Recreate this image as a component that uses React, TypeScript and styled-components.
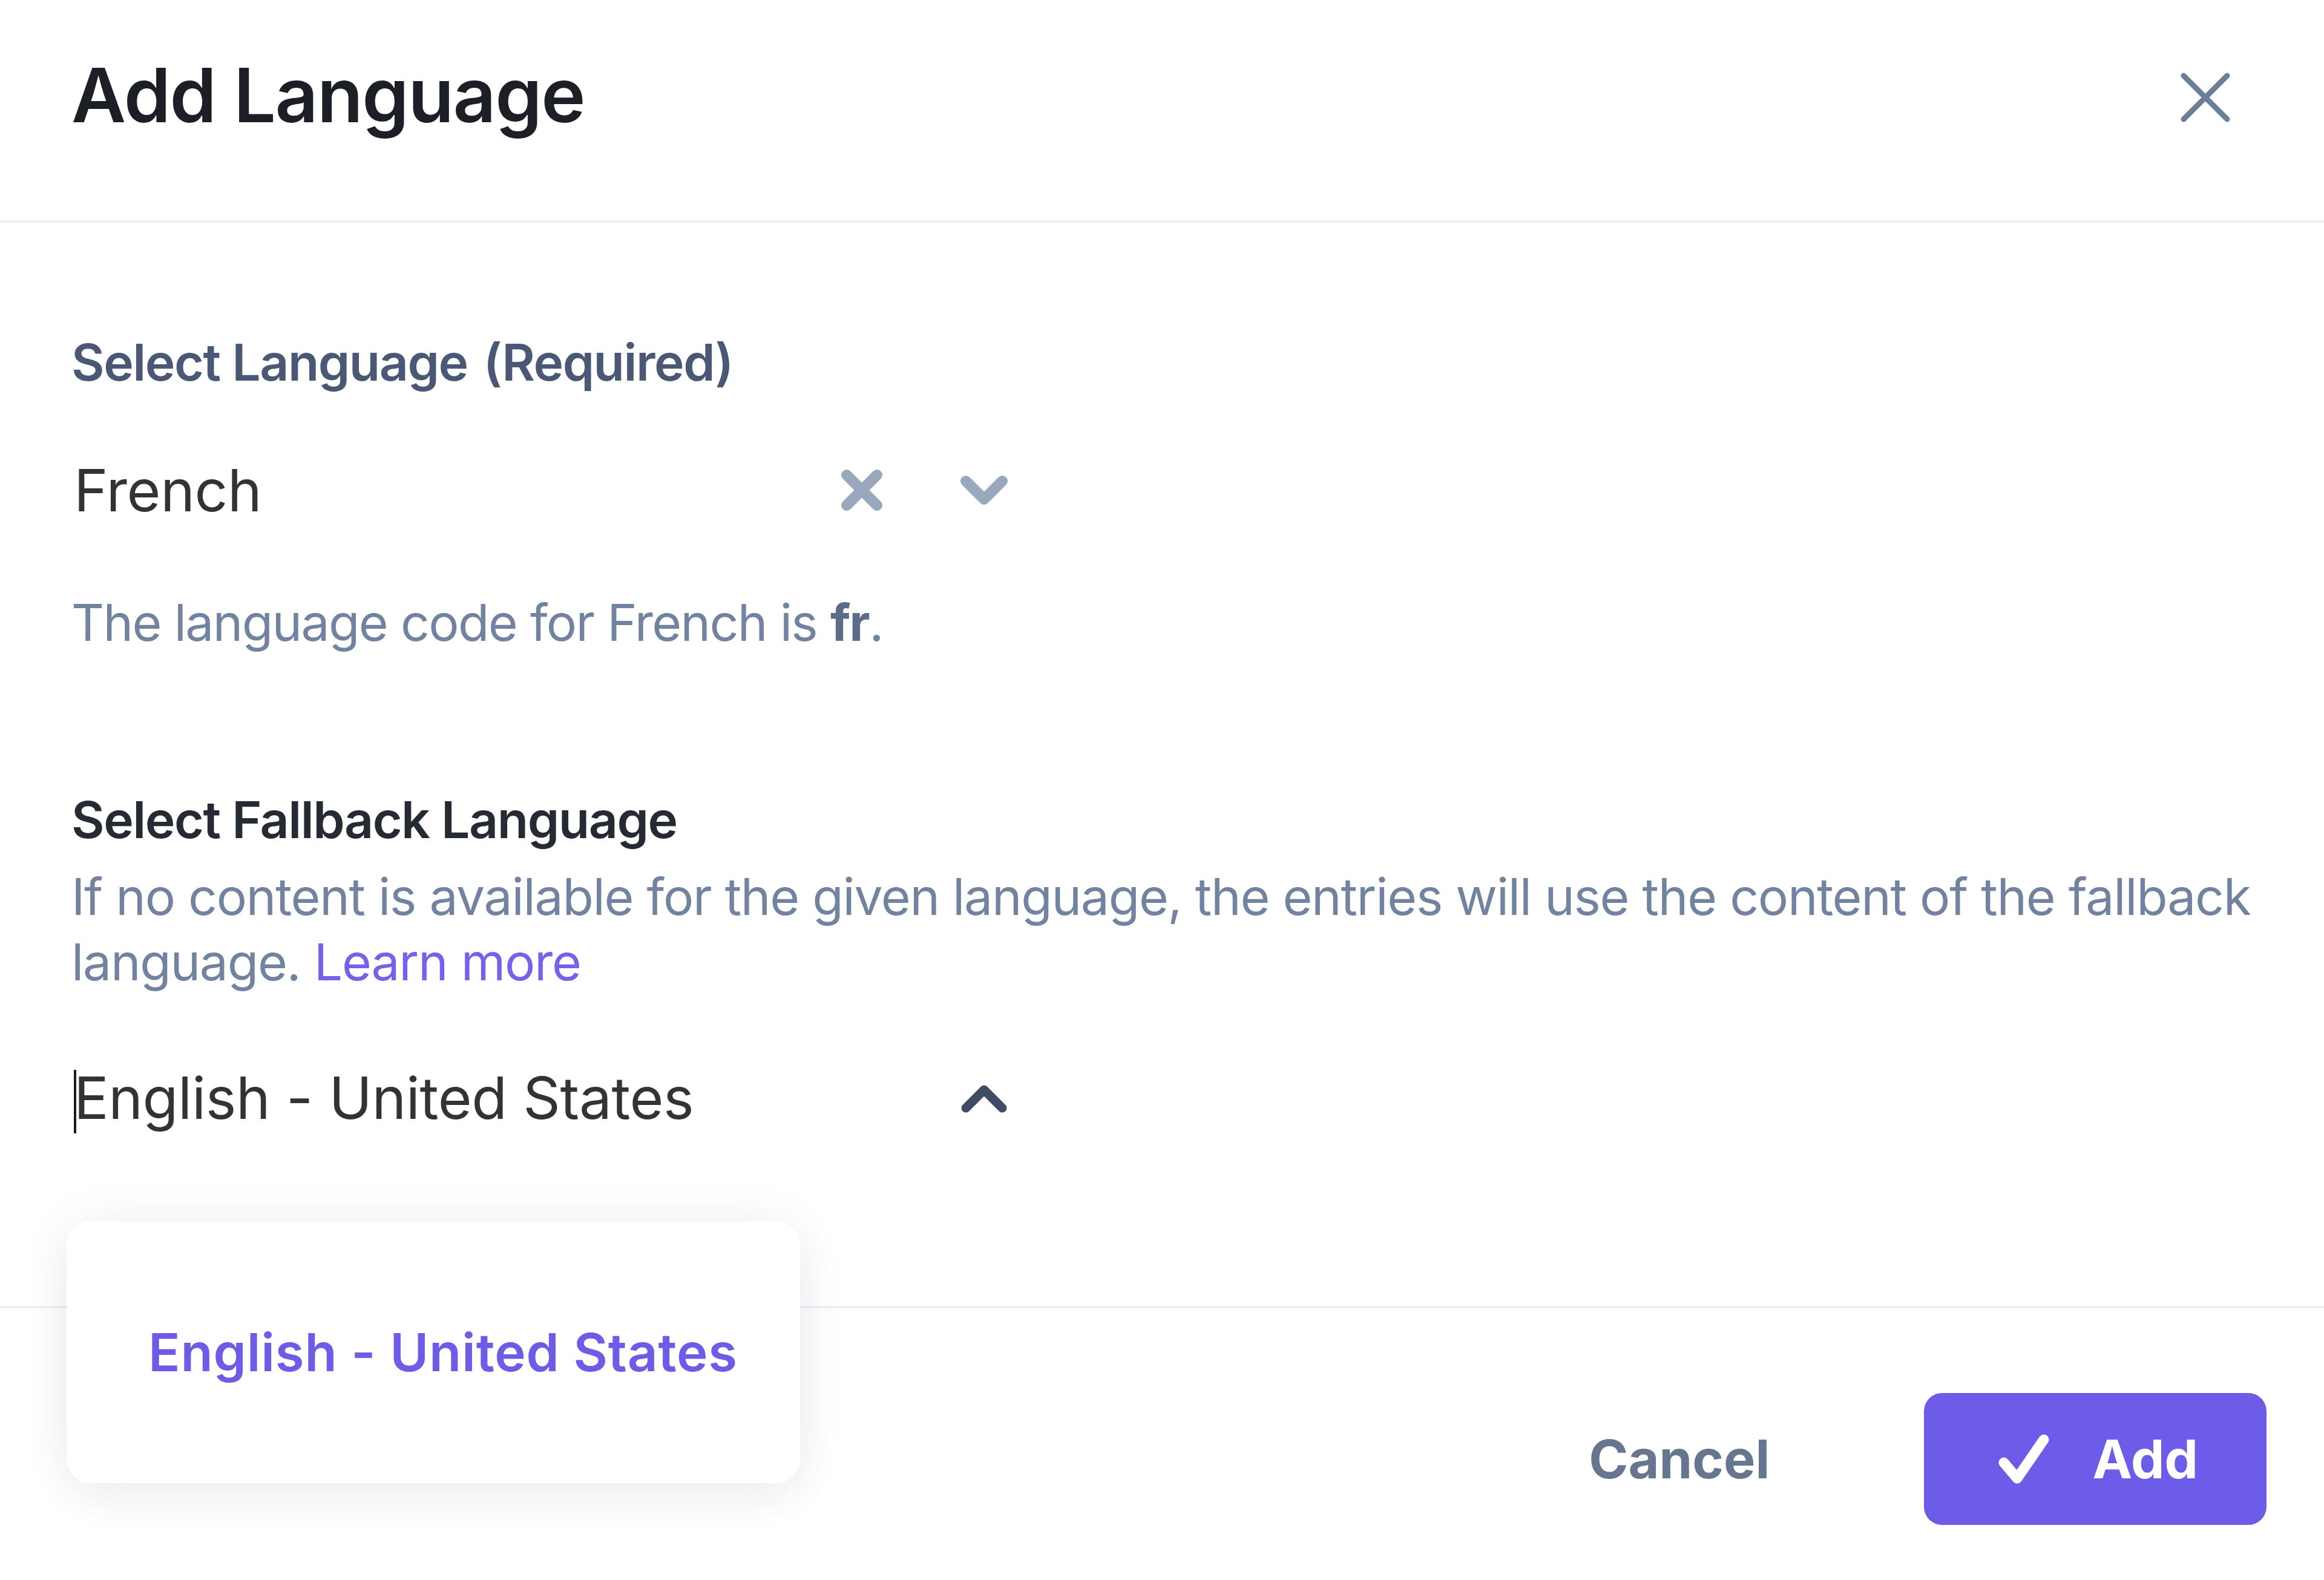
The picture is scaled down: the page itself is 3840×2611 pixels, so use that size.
import React from 'react';
import styled, { createGlobalStyle } from 'styled-components';

const GlobalStyle = createGlobalStyle`
  html, body {
    margin: 0;
    padding: 0;
    background: #ffffff;
  }
  body {
    font-family: Inter, "Liberation Sans", Arial, sans-serif;
    -webkit-font-smoothing: antialiased;
  }
  * {
    box-sizing: border-box;
  }
`;

const Modal = styled.div`
  width: 3840px;
  height: 2611px;
  overflow: hidden;
  background: #ffffff;
  display: flex;
  flex-direction: column;
`;

const Header = styled.header`
  height: 368px;
  flex-shrink: 0;
  display: flex;
  align-items: flex-start;
  justify-content: space-between;
  padding: 82px 124px 0 118px;
  border-bottom: 4px solid #eceff4;
`;

const Title = styled.h1`
  margin: 0;
  font-size: 124px;
  line-height: 150px;
  font-weight: 600;
  color: #1c1f26;
  letter-spacing: -1.6px;
`;

const CloseButton = styled.button`
  width: 144px;
  height: 144px;
  margin-top: 7px;
  padding: 0;
  border: none;
  background: transparent;
  display: flex;
  align-items: center;
  justify-content: center;
  color: #6b7f99;
`;

const Body = styled.main`
  height: 1790px;
  flex-shrink: 0;
  padding: 171px 60px 0 118px;
  display: flex;
  flex-direction: column;
`;

const Label = styled.div<{ $muted?: boolean }>`
  font-size: 84px;
  line-height: 120px;
  font-weight: 600;
  letter-spacing: -1.5px;
  color: ${(p) => (p.$muted ? '#4a5875' : '#262b33')};
  margin-top: ${(p) => (p.$muted ? '0' : '206px')};
`;

const Required = styled.span`
  margin-left: 6px;
`;

const Control = styled.div<{ $gap: number }>`
  width: 1608px;
  height: 228px;
  margin-top: ${(p) => p.$gap}px;
  display: flex;
  align-items: center;
`;

const Value = styled.div`
  flex: 1;
  display: flex;
  align-items: center;
  padding-left: 4px;
  font-size: 96px;
  letter-spacing: -0.4px;
  color: #333333;
  white-space: nowrap;
`;

const Caret = styled.span`
  display: inline-block;
  width: 4px;
  height: 105px;
  margin: 12px -4px 0 0;
  background: #1a1a1a;
`;

const Indicators = styled.div`
  display: flex;
  align-items: center;
  gap: 127px;
  padding-right: 60px;
`;

const Indicator = styled.span<{ $size: number }>`
  width: ${(p) => p.$size}px;
  height: ${(p) => p.$size}px;
  display: flex;
  align-items: center;
  justify-content: center;
`;

const Help = styled.p`
  margin: 45px 0 0;
  font-size: 84px;
  line-height: 120px;
  letter-spacing: -1.7px;
  color: #7183a0;

  strong {
    font-weight: 700;
    color: #5b6b88;
  }
`;

const Paragraph = styled.p`
  margin: 13px 0 0;
  font-size: 84px;
  line-height: 108px;
  letter-spacing: -1.3px;
  color: #7183a0;
`;

const LearnMore = styled.a`
  color: #7462ea;
  text-decoration: none;
`;

const SelectWrap = styled.div`
  position: relative;
`;

const Menu = styled.div`
  position: absolute;
  z-index: 2;
  top: calc(100% + 90px);
  left: -8px;
  width: 1212px;
  height: 433px;
  border-radius: 40px;
  background: #ffffff;
  box-shadow: 0 0 90px rgba(20, 30, 50, 0.05), 0 24px 70px rgba(20, 30, 50, 0.05);
  display: flex;
  align-items: center;
  padding-left: 135px;
`;

const Option = styled.div`
  font-size: 87px;
  font-weight: 600;
  letter-spacing: 0.8px;
  color: #6c5ce7;
  white-space: nowrap;
`;

const Footer = styled.footer`
  flex: 1;
  display: flex;
  align-items: flex-start;
  justify-content: flex-end;
  gap: 151px;
  padding: 140px 95px 0;
  border-top: 4px solid #eceff4;
`;

const Button = styled.button<{ $primary?: boolean }>`
  height: 218px;
  border: none;
  border-radius: 30px;
  display: flex;
  align-items: center;
  gap: 66px;
  padding: ${(p) => (p.$primary ? '0 113px 0 116px' : '0 104px')};
  background: ${(p) => (p.$primary ? '#6c5ce7' : 'transparent')};
  color: ${(p) => (p.$primary ? '#ffffff' : '#67768f')};
  font-family: Inter, "Liberation Sans", Arial, sans-serif;
  font-size: 88px;
  font-weight: 700;
`;

const CloseIcon = () => (
  <svg width="82" height="82" viewBox="0 0 82 82">
    <path d="M5 5 L77 77 M77 5 L5 77" stroke="currentColor" strokeWidth="9" strokeLinecap="round" />
  </svg>
);

const ClearIcon = () => (
  <svg width="70" height="70" viewBox="0 0 70 70">
    <path d="M10 10 L60 60 M60 10 L10 60" stroke="#9aa8bd" strokeWidth="18" strokeLinecap="round" />
  </svg>
);

const Chevron = ({ up }: { up?: boolean }) => (
  <svg width="80" height="80" viewBox="0 0 80 80">
    <path
      d={up ? 'M10 57 L40 27 L70 57' : 'M10 25 L40 55 L70 25'}
      stroke={up ? '#3f4c63' : '#9aa8bd'}
      strokeWidth={up ? 15 : 18}
      strokeLinecap="round"
      strokeLinejoin="round"
      fill="none"
    />
  </svg>
);

const CheckIcon = () => (
  <svg width="96" height="96" viewBox="0 0 96 96">
    <path d="M16 54 L38 80 L82 16" stroke="#ffffff" strokeWidth="17" strokeLinecap="round" strokeLinejoin="round" fill="none" />
  </svg>
);

const App = () => {
  return (
    <Modal>
      <GlobalStyle />
      <Header>
        <Title>Add Language</Title>
        <CloseButton aria-label="Close">
          <CloseIcon />
        </CloseButton>
      </Header>
      <Body>
        <Label $muted>
          Select Language <Required>(Required)</Required>
        </Label>
        <Control $gap={37}>
          <Value>French</Value>
          <Indicators>
            <Indicator $size={70}>
              <ClearIcon />
            </Indicator>
            <Indicator $size={80}>
              <Chevron />
            </Indicator>
          </Indicators>
        </Control>
        <Help>
          The language code for French is <strong>fr</strong>.
        </Help>

        <Label>Select Fallback Language</Label>
        <Paragraph>
          If no content is available for the given language, the entries will use the content of the fallback
          language. <LearnMore href="#">Learn more</LearnMore>
        </Paragraph>
        <SelectWrap>
          <Control $gap={56}>
            <Value>
              <Caret />
              English - United States
            </Value>
            <Indicators>
              <Indicator $size={80}>
                <Chevron up />
              </Indicator>
            </Indicators>
          </Control>
          <Menu>
            <Option>English - United States</Option>
          </Menu>
        </SelectWrap>
      </Body>
      <Footer>
        <Button>Cancel</Button>
        <Button $primary>
          <CheckIcon />
          Add
        </Button>
      </Footer>
    </Modal>
  );
};

export default App;
